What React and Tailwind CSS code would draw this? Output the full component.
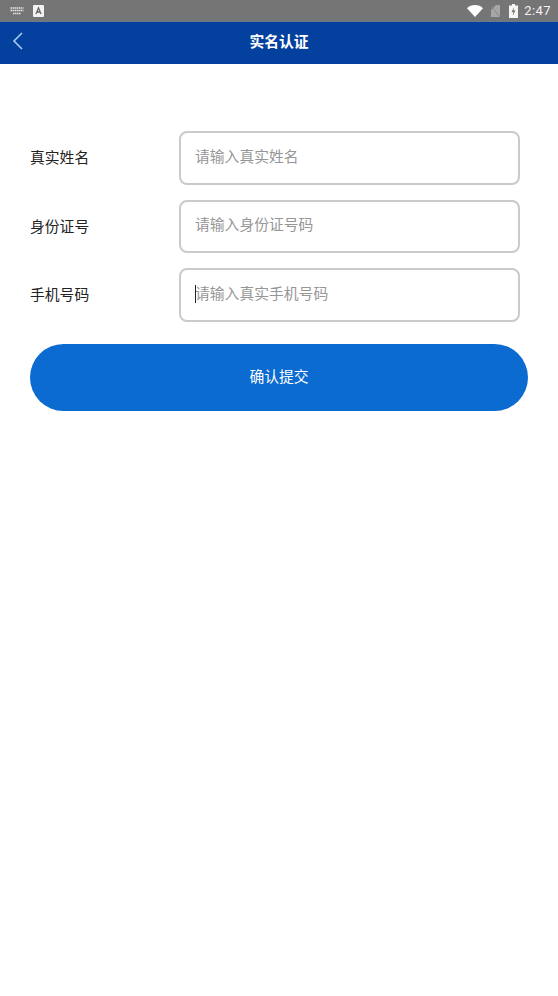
const cjk = { fontFamily: '"Noto Sans CJK SC", sans-serif' };

function StatusBar() {
    return (
        <div className="h-[22px] bg-[#757575] border-b border-[#6c7c8c] flex items-center pl-[10px] pr-[7px]">
            {/* keyboard */}
            <svg width="14" height="8" viewBox="0 0 14 8" className="opacity-80">
                <path d="M0.500 1h13M0.500 3.500h13M3 6.500h8" stroke="#fff" strokeWidth="1.500" strokeDasharray="1.500 0.500" fill="none" />
            </svg>
            {/* app notification */}
            <svg width="11" height="12" viewBox="0 0 11 12" className="ml-[9px]">
                <rect width="11" height="12" rx="1" fill="#f2f2f2" />
                <path d="M3 9l2.500-6L8 9M4 7h3" stroke="#666" strokeWidth="1.300" fill="none" />
            </svg>
            <div className="flex-1" />
            {/* wifi */}
            <svg width="16" height="12" viewBox="0 0 16 12">
                <path d="M0 3.200C2 1.200 5 0 8 0s6 1.200 8 3.200L8 12z" fill="#fff" />
            </svg>
            {/* no sim */}
            <svg width="11" height="12" viewBox="0 0 11 12" className="ml-[7px]">
                <path d="M1 12V5l5-5h4v12z" fill="#a6a6a6" />
                <path d="M1 1l9 11" stroke="#8a8a8a" strokeWidth="1" />
            </svg>
            {/* battery */}
            <svg width="9" height="14" viewBox="0 0 9 14" className="ml-[8px]">
                <path d="M3 0h3v1.500h3V14H0V1.500h3z" fill="#f5f5f5" />
                <path d="M5 3.500L2.500 8H4.300L3.800 11.500L6.500 6.500H4.700z" fill="#757575" />
            </svg>
            <span className="ml-[6px] text-[13px] leading-none tracking-[0.4px] text-[#f2f2f2]" style={{ fontFamily: "Roboto, sans-serif" }}>
                2:47
            </span>
        </div>
    );
}

function Field({ label, placeholder, focused }) {
    return (
        <div className="flex items-center">
            <label className="w-[149px] text-[14.800px] text-[#222] pb-[1px]">{label}</label>
            <div className="w-[341px] h-[53.500px] rounded-[8px] border-2 border-[#cacaca] flex items-center pl-[14px] pb-[4px] text-[14.800px] text-[#969696] relative">
                {focused && <span className="absolute left-[14px] top-[15px] w-px h-[18px] bg-[#222]" />}
                {placeholder}
            </div>
        </div>
    );
}

export default function App() {
    return (
        <div className="w-[558px] h-[996px] bg-white overflow-hidden" style={cjk}>
            <StatusBar />
            <header className="h-[42px] bg-[#04409d] relative flex items-center justify-center">
                <svg width="12" height="18" viewBox="0 0 12 18" className="absolute left-[12px] top-[10px]">
                    <path d="M10 1L2 9l8 8" stroke="#a9cdf5" strokeWidth="1.600" fill="none" />
                </svg>
                <h1 className="text-[14.800px] font-bold text-white pb-[3px]">实名认证</h1>
            </header>

            <main className="pt-[67px] pl-[30px]">
                <div className="flex flex-col gap-[15px]">
                    <Field label="真实姓名" placeholder="请输入真实姓名" />
                    <Field label="身份证号" placeholder="请输入身份证号码" />
                    <Field label="手机号码" placeholder="请输入真实手机号码" focused />
                </div>
                <button className="mt-[22.500px] w-[498px] h-[67px] rounded-full bg-[#0b6bd0] text-white text-[14.800px] pb-[2px]">
                    确认提交
                </button>
            </main>
        </div>
    );
}
